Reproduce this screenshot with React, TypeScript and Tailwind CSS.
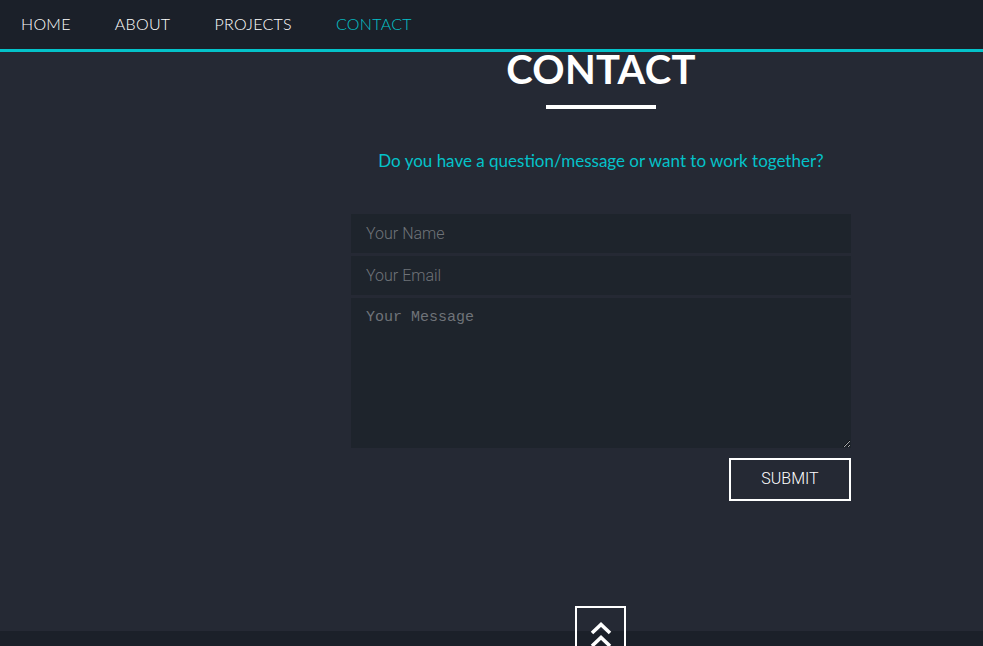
const navItems = ["HOME", "ABOUT", "PROJECTS", "CONTACT"];

const App = () => {
  return (
    <div className="w-[983px] h-[646px] overflow-hidden bg-[#252934] font-['Lato','Open_Sans',sans-serif] flex flex-col">
      <nav className="h-[52px] shrink-0 bg-[#1b2029] border-b-[3px] border-[#04c2c9] flex items-center pl-[21px] pb-[2px] gap-[44px]">
        {navItems.map((item) => (
          <a
            key={item}
            className={`text-[16px] font-light tracking-[0.3px] ${item === "CONTACT" ? "text-[#04c2c9]" : "text-white"}`}
          >
            {item}
          </a>
        ))}
      </nav>

      <section className="flex-1 flex flex-col items-center ml-[351px] w-[500px]">
        <h1 className="text-white font-bold text-[40px] leading-none mt-[-3px] tracking-[0.3px]">CONTACT</h1>
        <div className="w-[110px] h-[4px] bg-white mt-[16px]"></div>
        <p className="text-[#04c2c9] text-[17px] mt-[39px] whitespace-nowrap">
          Do you have a question/message or want to work together?
        </p>

        <form className="w-[500px] mt-[40px] flex flex-col gap-[3px]">
          <input
            placeholder="Your Name"
            className="h-[39px] bg-[#1e242c] px-[15px] text-[16px] text-white placeholder:text-[#6f7379] outline-none font-['Roboto',sans-serif] font-light"
          />
          <input
            placeholder="Your Email"
            className="h-[39px] bg-[#1e242c] px-[15px] text-[16px] text-white placeholder:text-[#6f7379] outline-none font-['Roboto',sans-serif] font-light"
          />
          <textarea
            placeholder="Your Message"
            className="h-[150px] bg-[#1e242c] px-[15px] py-[10px] text-[15px] leading-[20px] text-white placeholder:text-[#6f7379] outline-none resize-y font-['Liberation_Mono',monospace]"
          ></textarea>
          <div className="flex justify-end mt-[7px]">
            <button
              type="button"
              className="w-[122px] h-[43px] border-2 border-white text-white text-[16px] font-['Roboto',sans-serif] font-light"
            >
              SUBMIT
            </button>
          </div>
        </form>
      </section>

      <footer className="h-[15px] shrink-0 bg-[#1b2029] relative">
        <div className="absolute left-[575px] top-[-25px] w-[51px] h-[50px] border-2 border-white flex justify-center pt-[13px]">
          <svg width="22" height="28" viewBox="0 0 22 28" fill="none" stroke="white" strokeWidth="3.6">
            <polyline points="2,12 11,3.5 20,12" />
            <polyline points="2,25 11,16.5 20,25" />
          </svg>
        </div>
      </footer>
    </div>
  );
};

export default App;
